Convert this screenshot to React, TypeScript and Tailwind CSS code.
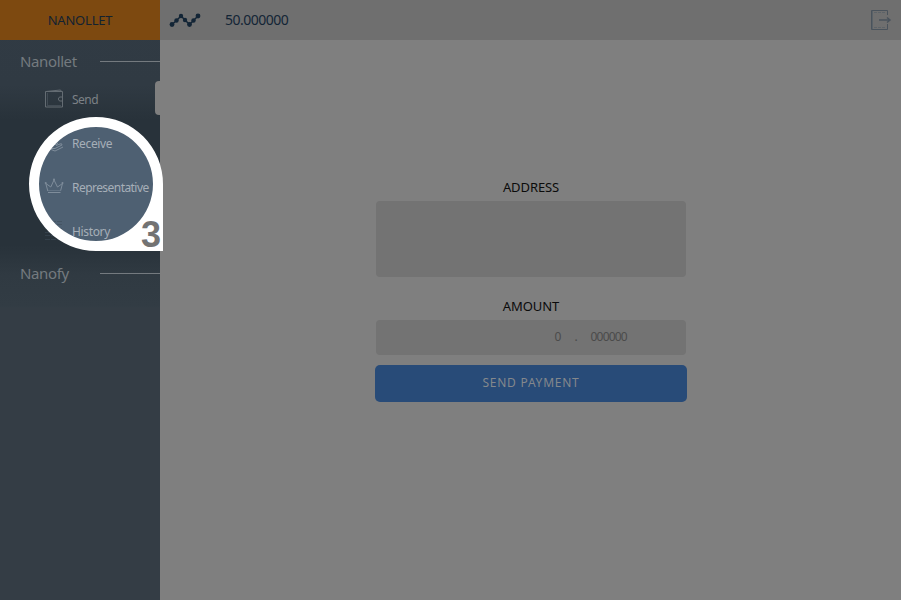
import React from "react";

const sans = "font-['Noto_Sans','Open_Sans',sans-serif]";

function Group({ label }: { label: string }) {
  return (
    <div className="flex h-[42px] items-center pl-5">
      <span className="w-20 text-[15px] leading-5 text-[#747a7f] tracking-[-0.38px]">{label}</span>
      <span className="h-px flex-1 bg-[#747a7f]" />
    </div>
  );
}

type ItemProps = { label: string; lit?: boolean; stroke?: string; tracking?: string; children: React.ReactNode };

function Item({ label, lit, stroke = "#7f8d9b", tracking = "tracking-[-0.35px]", children }: ItemProps) {
  return (
    <div className={`relative z-10 flex h-11 items-center pl-11 ${lit ? "text-[#a6afb8]" : "text-[#7c8186]"}`}>
      <svg className="mb-0.5 mr-2 h-5 w-5 shrink-0 overflow-visible" viewBox="0 0 20 20" fill="none" stroke={stroke} strokeWidth="1">
        {children}
      </svg>
      <span className={`whitespace-nowrap text-[12px] leading-4 ${tracking}`}>{label}</span>
    </div>
  );
}

export default function App() {
  return (
    <div className={`flex h-[600px] w-[901px] overflow-hidden bg-[#7f7f7f] ${sans}`}>
      <aside className="relative h-full w-40 shrink-0 bg-[linear-gradient(to_bottom,#313b44_0px,#303a43_85px,#28323a_120px,#28323a_245px,#303a42_275px,#323c44_306px,#343d45_308px)]">
        <div className="flex h-10 items-center justify-center bg-[#7d4910] pt-0.5 text-[13px] tracking-[-0.2px] text-[#132230]">NANOLLET</div>
        <div className="absolute left-[34px] top-[122px] h-[124px] w-[124px] rounded-full bg-[#4e6072]" />
        <Group label="Nanollet" />
        <div className="-mt-1">
          <Item label="Send" stroke="#646c73" tracking="tracking-[-0.5px]">
            <path d="M1.500 2.500h17v15.500h-17zM2 2.500l14.500-1.500 1 1.500M18.500 8h-3q-2.500 2 0 4h3" />
            <path d="M3.500 4v13M4 16.500h13" stroke="#424c55" />
          </Item>
          <Item label="Receive" lit>
            <path d="M4 14l3 1.500h4l7-3.500q0-2-2-1l-4 1.500M7 16.500l4 1.500 8-4M9 11.500h3l2-1.500" />
          </Item>
          <Item label="Representative" lit tracking="tracking-[-0.55px]">
            <path d="M4 15.500h12.500M3.800 14L1.800 6.500l5 3.500L10 3l3.500 7 5-3.500L16.500 14" />
            <path d="M4 13.500h12.500" stroke="#627384" />
            <g fill="#7f8d9b" stroke="none">
              <circle cx="1.700" cy="6" r="1" /><circle cx="10" cy="2.500" r="1" /><circle cx="18.500" cy="6" r="1" />
            </g>
          </Item>
          <Item label="History" lit stroke="#3e4c598c">
            <path strokeDasharray="5 1" d="M1 0.500h17M1 3.500h17M1 7.500h17M1 11.500h17M1 14.500h17M1 18.500h17" />
          </Item>
        </div>
        <div className="-mt-0.5">
          <Group label="Nanofy" />
        </div>
        <div className="absolute right-0 top-[81px] h-[34px] w-[5px] rounded-l-sm bg-[#7f7f7f]" />
        <svg className="absolute left-[29px] top-[117px] z-20" width="134" height="134" viewBox="0 0 134 134">
          <path fill="#fff" fillRule="evenodd" d="M67 0A67 67 0 0 1 134 67V134H67A67 67 0 0 1 67 0ZM67 10A57 57 0 1 0 67 124A57 57 0 1 0 67 10Z" />
        </svg>
        <span className="absolute left-[141px] top-[215px] z-30 font-['Liberation_Sans',sans-serif] text-[36px] font-bold leading-[40px] text-[#737373]">3</span>
      </aside>
      <div className="flex flex-1 flex-col">
        <header className="flex h-10 items-center bg-[#6f6f6f] pl-[9px] pr-[9px]">
          <svg width="32" height="20" viewBox="0 0 32 20" fill="#132536" stroke="#132536">
            <path fill="none" strokeWidth="1.500" d="M3 14.500L7.500 10.500 12 6 16 10 20.500 14.500 24.500 10.500 29 6" />
            <g stroke="none">
              <circle cx="3" cy="14.500" r="2.400" /><circle cx="7.500" cy="10.500" r="2.200" />
              <circle cx="12" cy="6" r="2.200" /><circle cx="16" cy="10" r="2.200" />
              <circle cx="20.500" cy="14.500" r="2.400" /><circle cx="24.500" cy="10.500" r="2.200" />
              <circle cx="29" cy="6" r="2.400" />
            </g>
          </svg>
          <span className="ml-6 pb-px text-[14px] tracking-[-0.5px] text-[#132536]">50.000000</span>
          <svg className="ml-auto" width="22" height="22" viewBox="0 0 22 22" fill="none" stroke="#4a535c">
            <path d="M17.500 6V1.500h-16v19h16V15" />
            <path stroke="#5a6268" d="M2.500 2v18" />
            <path stroke="#5d6368" d="M4 3.500h12M4 18.500h12" strokeDasharray="3 1" />
            <path d="M9 11h10M17 8.500L20 11l-3 2.500" strokeWidth="1.500" />
          </svg>
        </header>
        <main className="flex flex-col items-center pt-[137px]">
          <label className="h-6 pl-px text-[13px] leading-5 tracking-[-0.1px] text-[#0b0b0b]">ADDRESS</label>
          <div className="h-[76px] w-[310px] rounded bg-[#737373]" />
          <label className="mt-[19px] h-6 pl-px text-[13px] leading-5 tracking-[-0.05px] text-[#0b0b0b]">AMOUNT</label>
          <div className="flex h-[35px] w-[310px] items-center rounded bg-[#737373] pb-0.5 pl-[179px] text-[12px] tracking-[-0.8px] text-[#4b4b4b]">
            <span className="w-5">0</span><span className="w-4">.</span><span>000000</span>
          </div>
          <button className="mt-[10px] h-[37px] w-[312px] rounded-[5px] bg-[#284b78] pb-0.5 pl-px text-[12px] tracking-[0.75px] text-[#84888c]">SEND PAYMENT</button>
        </main>
      </div>
    </div>
  );
}
